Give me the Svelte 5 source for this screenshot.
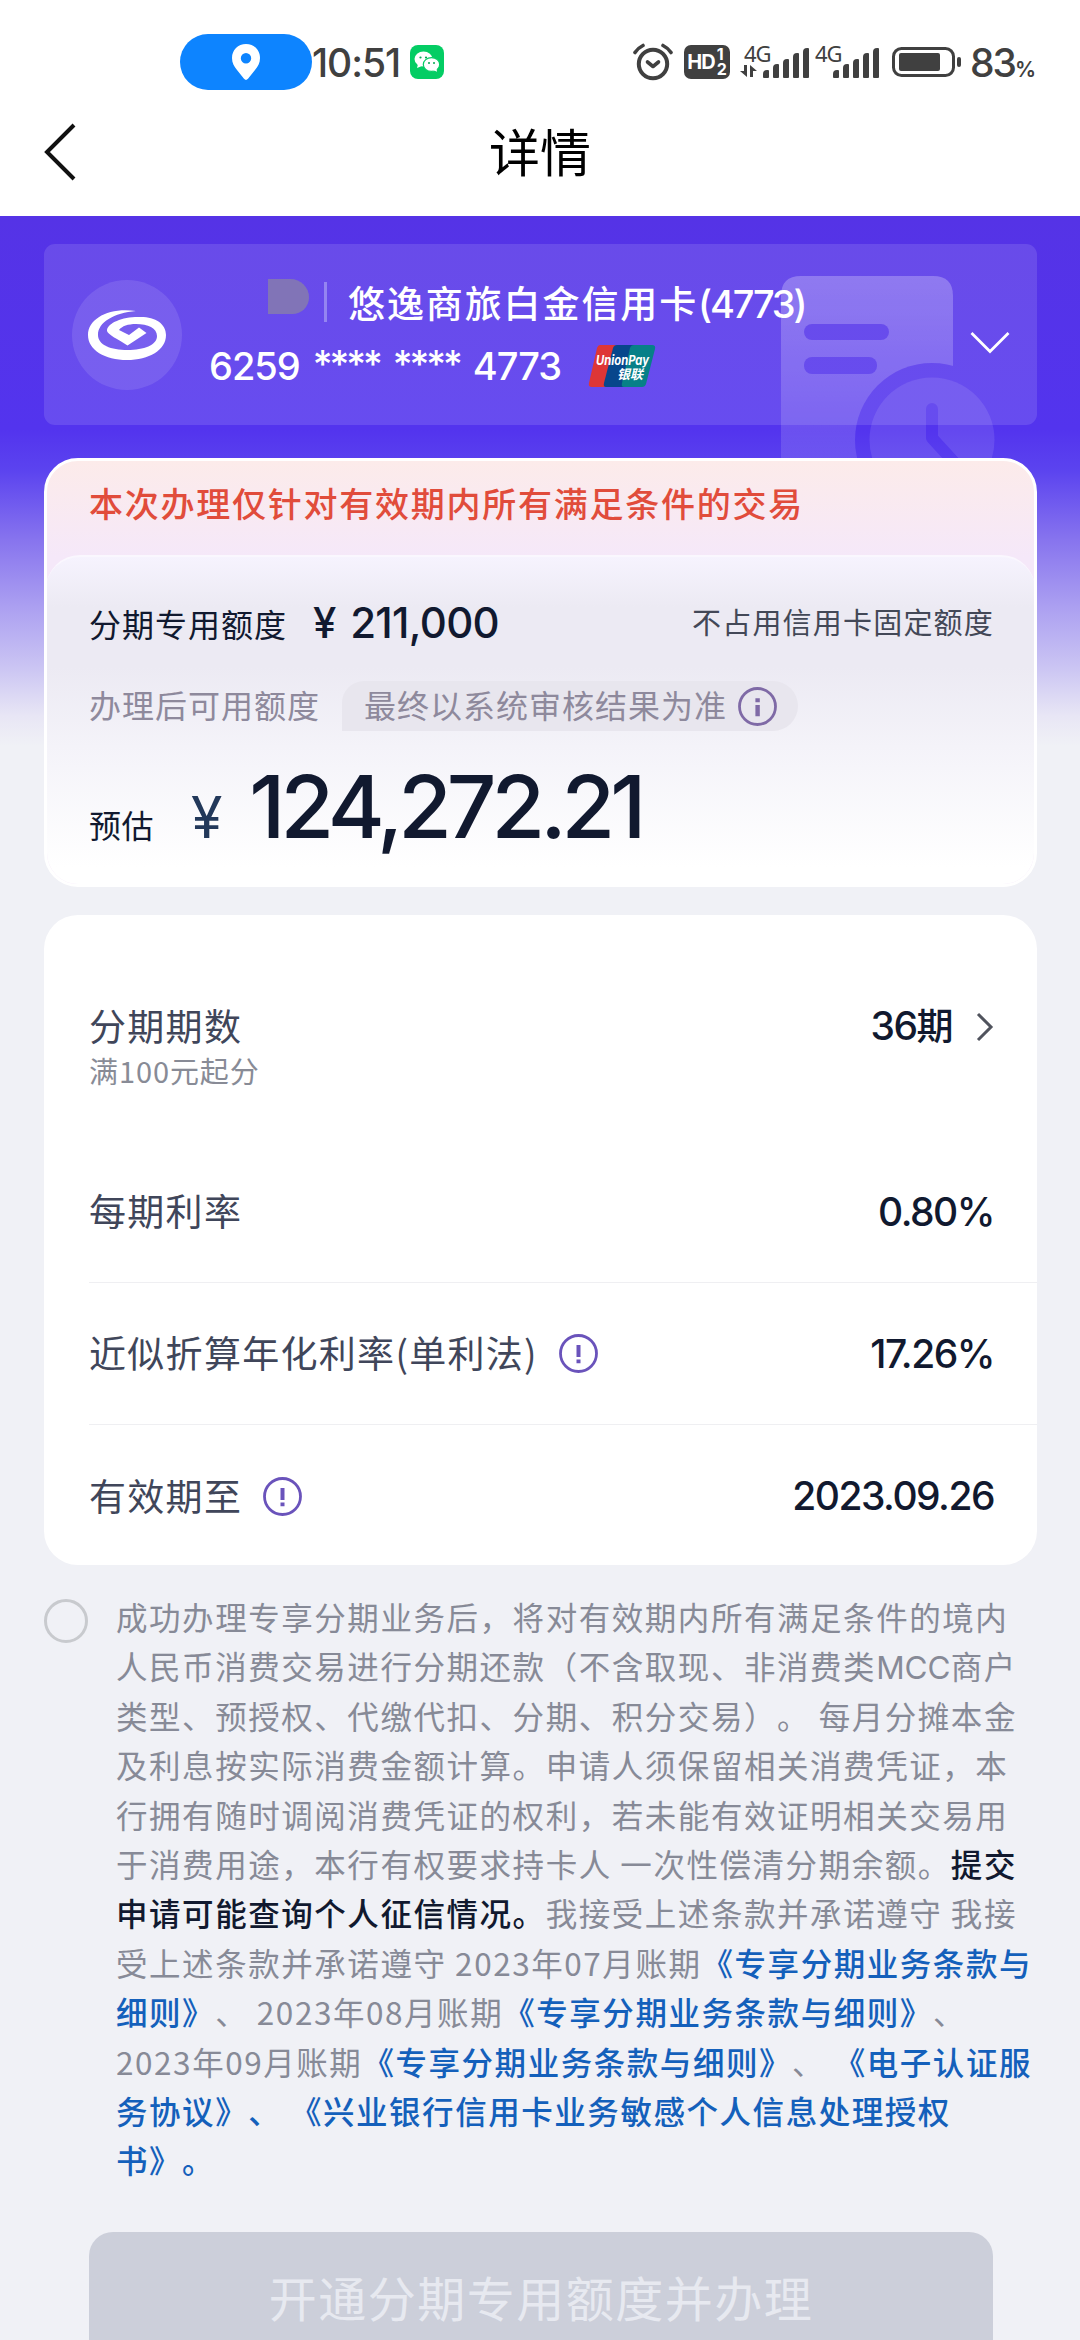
<script lang="ts">
  type Tone = 'plain' | 'latin' | 'strong' | 'link';

  interface Segment {
    text: string;
    tone: Tone;
  }

  interface Detail {
    label: string;
    value: string;
    hint: boolean;
  }

  const signalBars = [8, 14, 19, 25, 30];

  const details: Detail[] = [
    { label: '每期利率', value: '0.80%', hint: false },
    { label: '近似折算年化利率(单利法)', value: '17.26%', hint: true },
    { label: '有效期至', value: '2023.09.26', hint: true },
  ];

  const plain = (text: string): Segment => ({ text, tone: 'plain' });
  const latin = (text: string): Segment => ({ text, tone: 'latin' });
  const strong = (text: string): Segment => ({ text, tone: 'strong' });
  const link = (text: string): Segment => ({ text, tone: 'link' });

  const terms: Segment[][] = [
    [plain('成功办理专享分期业务后，将对有效期内所有满足条件的境内')],
    [plain('人民币消费交易进行分期还款（不含取现、非消费类'), latin('MCC'), plain('商户')],
    [plain('类型、预授权、代缴代扣、分期、积分交易）。 每月分摊本金')],
    [plain('及利息按实际消费金额计算。申请人须保留相关消费凭证，本')],
    [plain('行拥有随时调阅消费凭证的权利，若未能有效证明相关交易用')],
    [plain('于消费用途，本行有权要求持卡人 一次性偿清分期余额。'), strong('提交')],
    [strong('申请可能查询个人征信情况。'), plain('我接受上述条款并承诺遵守 我接')],
    [plain('受上述条款并承诺遵守 2023年07月账期'), link('《专享分期业务条款与')],
    [link('细则》'), plain('、 2023年08月账期'), link('《专享分期业务条款与细则》'), plain('、')],
    [plain('2023年09月账期'), link('《专享分期业务条款与细则》'), plain('、 '), link('《电子认证服')],
    [link('务协议》、 《兴业银行信用卡业务敏感个人信息处理授权')],
    [link('书》。')],
  ];

  let accepted = $state(false);
</script>

{#snippet signal(data: boolean)}
  <div class="signal" class:data>
    <span class="network">4G</span>
    {#if data}
      <svg class="arrows" width="17" height="12" viewBox="0 0 17 12">
        <path d="M4 0h3v12L0 6h4zM10 12V0l7 6h-4v6z" fill="#404040" />
      </svg>
    {/if}
    <div class="bars">
      {#each signalBars as height}
        <i style="height: {height}px"></i>
      {/each}
    </div>
  </div>
{/snippet}

<div class="page" lang="zh-CN">
  <div class="status">
    <div class="location">
      <svg width="28" height="36" viewBox="0 0 28 36">
        <path
          d="M14 0C6 0 0 6 0 14c0 5 2 8 5 12l7 8.800q2 2.200 4 0L23 26c3-4 5-7 5-12C28 6 22 0 14 0zm0 9a5.200 5.200 0 1 1 0 10.400A5.200 5.200 0 0 1 14 9z"
          fill="#fff"
          fill-rule="evenodd"
        />
      </svg>
    </div>
    <span class="time">10:51</span>
    <svg class="wechat" width="34" height="34" viewBox="0 0 34 34">
      <rect width="34" height="34" rx="8" fill="#04cd64" />
      <ellipse cx="13.500" cy="14" rx="9" ry="7.500" fill="#fff" />
      <path d="M8 19l-1 4 5-2z" fill="#fff" />
      <ellipse cx="21.500" cy="19.500" rx="8.200" ry="6.900" fill="#fff" stroke="#04cd64" stroke-width="1.200" />
      <path d="M23 25l4 1.800-.5-3.800z" fill="#fff" />
      <g fill="#04a852">
        <circle cx="10.500" cy="12.500" r="1.100" />
        <circle cx="16" cy="12.500" r="1.100" />
        <circle cx="19" cy="18" r="1" />
        <circle cx="24" cy="18" r="1" />
      </g>
    </svg>

    <div class="system">
      <svg width="40" height="38" viewBox="0 0 40 38" fill="none" stroke="#404040" stroke-linecap="round">
        <circle cx="20" cy="21" r="14.200" stroke-width="4" />
        <path d="M14.500 19l5.500 4.500 5.500-4.500" stroke-width="3.600" stroke-linejoin="round" />
        <path d="M2 9.500Q5 5 10 2.500M38 9.500Q35 5 30 2.500" stroke-width="3.600" />
      </svg>
      <div class="hd">
        <span>HD</span>
        <div class="slots"><b>1</b><b>2</b></div>
      </div>
      {@render signal(true)}
      {@render signal(false)}
      <svg class="battery" width="70" height="30" viewBox="0 0 70 30">
        <rect x="1.500" y="1.500" width="60" height="27" rx="8" fill="none" stroke="#404040" stroke-width="3" />
        <rect x="7" y="6" width="41" height="18" rx="2" fill="#404040" />
        <rect x="65" y="10" width="4" height="10" rx="2" fill="#404040" />
      </svg>
      <span class="level">83<small>%</small></span>
    </div>
  </div>

  <header>
    <svg class="back" width="34" height="60" viewBox="0 0 34 60" fill="none" stroke="#111" stroke-width="4">
      <path d="M31 3L4 30l27 27" />
    </svg>
    <h1>详情</h1>
  </header>

  <main>
    <svg class="watermark" width="240" height="242" viewBox="0 0 240 242">
      <defs>
        <linearGradient id="doc" x1="0" y1="0" x2="0" y2="1">
          <stop offset="0" stop-color="#fff" stop-opacity="0.260" />
          <stop offset="1" stop-color="#fff" stop-opacity="0.120" />
        </linearGradient>
        <mask id="cut">
          <rect width="240" height="242" fill="#fff" />
          <rect x="23" y="108" width="85" height="16" rx="8" fill="#000" />
          <rect x="23" y="141" width="73" height="17" rx="8" fill="#000" />
          <circle cx="151" cy="224" r="77" fill="#000" />
        </mask>
        <mask id="hands">
          <rect width="240" height="242" fill="#fff" />
          <path
            d="M151 193v29l22 24"
            fill="none"
            stroke="#000"
            stroke-width="12"
            stroke-linecap="round"
            stroke-linejoin="round"
          />
        </mask>
      </defs>
      <path d="M0 242V80Q0 60 20 60H152Q172 60 172 80V242z" fill="url(#doc)" mask="url(#cut)" />
      <circle cx="151" cy="224" r="62.500" fill="#fff" fill-opacity="0.100" mask="url(#hands)" />
    </svg>

    <section class="account">
      <div class="emblem">
        <svg width="78" height="50" viewBox="0 0 78 50">
          <path
            d="M48 1C22-3 0 8 0 25c0 15 17 25 39 25s39-10 39-25C78 13 66 6 50 7 34 7 20 13 19 20c-1 4 11 9 20.500 15.500L58.500 23 51 17.500 41 25l-10-5c3-4 9-6 17-6 12 0 21 4 21 12 0 9-13 14-29.500 14S10 35 10 25C10 12 26 3 48 1z"
            fill="#fff"
          />
        </svg>
      </div>
      <div class="account-text">
        <div class="account-name">
          <i class="mask"></i>
          <i class="divider"></i>
          <span>悠逸商旅白金信用卡<em>(4773)</em></span>
        </div>
        <div class="account-number">
          <span>6259</span>
          <span class="stars">****</span>
          <span class="stars">****</span>
          <span>4773</span>
          <svg class="unionpay" width="68" height="42" viewBox="0 0 68 42">
            <path d="M12 0h16L18 42H4Q0 42 1 38L9 3Q10 0 12 0z" fill="#de3636" />
            <path d="M29 0h18L36 42H18Q15 42 16 38L25 3Q26 0 29 0z" fill="#07468c" />
            <path d="M46 0h18q4 0 3 4l-9 35q-1 3-4 3H36q-3 0-2-4l8-35q1-3 4-3z" fill="#078088" />
            <text x="8" y="20" class="union-en" textLength="53" lengthAdjust="spacingAndGlyphs">UnionPay</text>
            <text x="29" y="34" class="union-cn" textLength="26">银联</text>
          </svg>
        </div>
      </div>
      <svg class="down" width="40" height="24" viewBox="0 0 40 24" fill="none" stroke="#fff" stroke-width="2.800">
        <path d="M1.500 2L20 20.500 38.500 2" />
      </svg>
    </section>

    <section class="quota">
      <p class="notice">本次办理仅针对有效期内所有满足条件的交易</p>
      <div class="quota-body">
        <div class="limit">
          <span class="limit-label">分期专用额度</span>
          <span class="limit-value">¥ 211,000</span>
          <span class="limit-note">不占用信用卡固定额度</span>
        </div>
        <div class="available">
          <span>办理后可用额度</span>
          <div class="bubble">
            <span>最终以系统审核结果为准</span>
            <svg width="39" height="39" viewBox="0 0 39 39">
              <circle cx="19.500" cy="19.500" r="18" fill="none" stroke="#7f6aa6" stroke-width="2.800" />
              <path d="M17.400 11.200h4.400v4h-4.400zM17.400 18h4.400v11.200h-4.400z" fill="#7f6aa6" />
            </svg>
          </div>
        </div>
        <div class="estimate">
          <span class="estimate-label">预估</span>
          <span class="currency">¥</span>
          <span class="amount">124,272.21</span>
        </div>
      </div>
    </section>

    <section class="details">
      <div class="row periods">
        <div class="periods-label">
          <span class="label">分期期数</span>
          <small>满100元起分</small>
        </div>
        <div class="periods-value">
          <span class="value">36<em>期</em></span>
          <svg width="18" height="30" viewBox="0 0 18 30" fill="none" stroke="#50535d" stroke-width="3">
            <path d="M2 2l13 13L2 28" />
          </svg>
        </div>
      </div>
      {#each details as item}
        <div class="row">
          <span class="label">{item.label}</span>
          {#if item.hint}
            <svg class="hint" width="39" height="39" viewBox="0 0 39 39">
              <circle cx="19.500" cy="19.500" r="18" fill="none" stroke="#6a53bb" stroke-width="2.800" />
              <path d="M17.500 11h4v12h-4zM17.500 25.500h4v3.800h-4z" fill="#6a53bb" />
            </svg>
          {/if}
          <span class="value">{item.value}</span>
        </div>
      {/each}
    </section>

    <section class="agreement">
      <button
        class="check"
        class:accepted
        aria-label="同意"
        aria-pressed={accepted}
        onclick={() => (accepted = !accepted)}
      ></button>
      <div class="terms">
        {#each terms as line}
          <p>{#each line as part}<span class={part.tone}>{part.text}</span>{/each}</p>
        {/each}
      </div>
    </section>

    <button class="submit" disabled={!accepted}>开通分期专用额度并办理</button>
  </main>
</div>

<style>
  :global(body) {
    margin: 0;
    background: #f0f1f6;
  }

  .page {
    width: 1080px;
    height: 2340px;
    overflow: hidden;
    display: flex;
    flex-direction: column;
    background: #f0f1f6;
    font-family: 'Noto Sans CJK SC', sans-serif;
    color: #11192f;
    text-spacing-trim: space-all;
  }

  .page * {
    box-sizing: border-box;
  }

  h1,
  p {
    margin: 0;
    font-weight: 400;
  }

  em,
  i {
    font-style: normal;
  }

  svg {
    display: block;
    flex: none;
  }

  /* status bar */
  .status {
    flex: none;
    height: 94px;
    padding: 30px 46px 0 180px;
    display: flex;
    align-items: center;
    background: #fff;
    font-family: Inter, sans-serif;
    color: #404040;
  }

  .location {
    width: 132px;
    height: 56px;
    border-radius: 28px;
    background: #0d84ff;
    display: flex;
    align-items: center;
    justify-content: center;
  }

  .time {
    width: 98px;
    font-size: 39px;
    font-weight: 500;
    letter-spacing: -1.100px;
    white-space: nowrap;
  }

  .system {
    margin-left: auto;
    display: flex;
    align-items: center;
  }

  .hd {
    width: 46px;
    height: 34px;
    margin: 0 10px 0 11px;
    border-radius: 7px;
    background: #404040;
    color: #fff;
    display: flex;
    align-items: center;
    justify-content: center;
    gap: 2px;
    font-size: 20px;
    font-weight: 700;
    letter-spacing: -1px;
  }

  .slots {
    display: flex;
    flex-direction: column;
    font-size: 16px;
    line-height: 15px;
    letter-spacing: 0;
  }

  .slots b {
    font-weight: 700;
  }

  .signal {
    position: relative;
    width: 64px;
    height: 34px;
    margin-right: 5px;
    display: flex;
    justify-content: flex-end;
    align-items: flex-end;
  }

  .signal.data {
    width: 69px;
    margin-right: 6px;
  }

  .network {
    position: absolute;
    left: 0;
    top: -3px;
    font-family: 'Noto Sans', sans-serif;
    font-size: 22px;
    line-height: 22px;
    letter-spacing: -1px;
  }

  .signal.data .network {
    left: 4px;
  }

  .arrows {
    position: absolute;
    left: 0;
    bottom: 2px;
  }

  .bars {
    display: flex;
    align-items: flex-end;
    gap: 3.500px;
    padding-bottom: 1px;
  }

  .bars i {
    width: 6.500px;
    border-radius: 4px 1px 1px 1px;
    background: #404040;
  }

  .battery {
    margin-left: 8px;
  }

  .level {
    margin-left: 8px;
    width: 64px;
    font-size: 39px;
    font-weight: 500;
    letter-spacing: -2px;
    white-space: nowrap;
  }

  .level small {
    font-size: 21px;
    font-weight: 600;
  }

  /* title bar */
  header {
    flex: none;
    height: 122px;
    padding: 0 43px;
    display: grid;
    grid-template-columns: 34px 1fr 34px;
    align-items: center;
    background: #fff;
    color: #000;
  }

  h1 {
    text-align: center;
    font-size: 51px;
    line-height: 60px;
    margin-bottom: 10px;
  }

  .back {
    margin-bottom: 7px;
  }

  main {
    position: relative;
    flex: 1;
    min-height: 0;
    padding: 28px 43px 0 44px;
    display: flex;
    flex-direction: column;
    background: linear-gradient(
      #5533e6 0,
      #5334ee 214px,
      #5b43ef 254px,
      #8774ee 324px,
      #ab9ff1 390px,
      #cbc5f3 452px,
      #e8e6f5 500px,
      #f0f1f6 530px
    );
  }

  .watermark {
    position: absolute;
    left: 781px;
    top: 0;
  }

  /* account card */
  .account {
    position: relative;
    flex: none;
    height: 181px;
    padding: 0 27px 0 28px;
    border-radius: 11px;
    background: rgba(255, 255, 255, 0.120);
    color: #fff;
    display: flex;
    align-items: center;
  }

  .emblem {
    width: 110px;
    height: 110px;
    border-radius: 50%;
    background: rgba(255, 255, 255, 0.110);
    display: flex;
    align-items: center;
    justify-content: center;
  }

  .account-text {
    width: 640px;
    margin-left: 27px;
    margin-bottom: 2px;
    display: flex;
    flex-direction: column;
    gap: 4px;
  }

  .account-name {
    height: 60px;
    padding-left: 59px;
    display: flex;
    align-items: center;
    font-size: 37px;
    font-weight: 500;
    letter-spacing: 1.900px;
    white-space: nowrap;
  }

  .account-name em {
    font-family: Inter, sans-serif;
    font-size: 38px;
    letter-spacing: -2.200px;
  }

  .mask {
    width: 41px;
    height: 35px;
    margin-bottom: 10px;
    border-radius: 0 20px 18px 0;
    background: #8174b7;
  }

  .divider {
    width: 3px;
    height: 40px;
    margin: 0 21px 0 15px;
    background: #9484f1;
  }

  .account-number {
    height: 60px;
    display: flex;
    align-items: center;
    gap: 13px;
    font-family: Inter, sans-serif;
    font-size: 38px;
    font-weight: 500;
    letter-spacing: -1px;
  }

  .stars {
    width: 67px;
    margin-top: -4px;
    letter-spacing: -3px;
  }

  .unionpay {
    margin-left: 14px;
    overflow: visible;
  }

  .union-en {
    font: italic 700 13px Inter, sans-serif;
    fill: #fff;
    letter-spacing: 0;
  }

  .union-cn {
    font: italic 700 13px 'Noto Sans CJK SC', sans-serif;
    fill: #fff;
    letter-spacing: 0;
  }

  .down {
    margin-left: auto;
    margin-top: 16px;
  }

  /* quota card */
  .quota {
    position: relative;
    flex: none;
    height: 429px;
    margin-top: 33px;
    border: 3px solid #fff;
    border-radius: 34px;
    background: linear-gradient(#fcebea, #f5e8f9 96px, #f5e8f9);
    overflow: hidden;
    display: flex;
    flex-direction: column;
  }

  .notice {
    height: 96px;
    padding-left: 42px;
    font-size: 34px;
    font-weight: 500;
    line-height: 83px;
    letter-spacing: 1.750px;
    color: #e14c3b;
  }

  .quota-body {
    flex: 1;
    margin: 0 -1px;
    padding: 34px 43px 0;
    border-top: 2px solid #faf7fe;
    border-radius: 34px 34px 0 0;
    background: linear-gradient(#f6f3fe, #eceaf3 50px, #eceaf3 110px, #f4f3f9 190px, #fff 310px);
  }

  .limit {
    height: 64px;
    display: flex;
    align-items: center;
    white-space: nowrap;
  }

  .limit-label {
    font-size: 32px;
    letter-spacing: 1px;
  }

  .limit-value {
    margin-left: 26px;
    margin-bottom: 1px;
    font-family: Inter, sans-serif;
    font-size: 42px;
    font-weight: 500;
    letter-spacing: -0.700px;
    word-spacing: 4px;
  }

  .limit-note {
    margin-left: auto;
    margin-right: -2px;
    margin-bottom: 4px;
    font-size: 29px;
    letter-spacing: 1.200px;
    color: #434857;
  }

  .available {
    height: 50px;
    margin-top: 26px;
    display: flex;
    align-items: center;
    font-size: 32px;
    line-height: 46px;
    letter-spacing: 1px;
    color: #8e899c;
    white-space: nowrap;
  }

  .available span {
    margin-bottom: 4px;
  }

  .bubble {
    height: 50px;
    width: 456px;
    margin-left: 22px;
    padding: 0 21px 0 22px;
    border-radius: 22px 25px 25px 0;
    background: #e8e6ee;
    display: flex;
    align-items: center;
    justify-content: space-between;
  }

  .estimate {
    height: 130px;
    margin-top: 23px;
    display: flex;
    align-items: baseline;
    white-space: nowrap;
  }

  .estimate-label {
    font-size: 32px;
    letter-spacing: 0.500px;
  }

  .currency {
    margin-left: 37px;
    font-family: Inter, sans-serif;
    font-size: 57px;
    color: #22385a;
  }

  .amount {
    margin-left: 27px;
    font-family: Inter, sans-serif;
    font-size: 87px;
    font-weight: 500;
    letter-spacing: -5px;
  }

  /* plan details */
  .details {
    flex: none;
    height: 650px;
    margin-top: 28px;
    padding-left: 45px;
    border-radius: 34px;
    background: #fff;
  }

  .row {
    height: 142px;
    padding-right: 43px;
    display: flex;
    align-items: center;
    border-bottom: 1px solid #efeff2;
  }

  .row:last-child {
    border-bottom: 0;
  }

  .periods {
    height: 226px;
    align-items: flex-start;
    padding-top: 87px;
    border-bottom: 0;
  }

  .periods-label {
    display: flex;
    flex-direction: column;
  }

  .periods-label small {
    font-size: 29px;
    line-height: 42px;
    letter-spacing: 0.900px;
    color: #888b96;
  }

  .label {
    font-size: 37px;
    line-height: 46px;
    letter-spacing: 1.300px;
    color: #40465a;
    white-space: nowrap;
    margin-bottom: 3px;
  }

  .periods .label {
    margin-bottom: 1px;
  }

  .hint {
    margin-left: 21px;
  }

  .value {
    margin-left: auto;
    font-family: Inter, 'Noto Sans CJK SC', sans-serif;
    font-size: 39px;
    font-weight: 500;
    line-height: 48px;
    letter-spacing: -1.500px;
    white-space: nowrap;
  }

  .value em {
    font-size: 37px;
  }

  .periods-value {
    margin-left: auto;
    display: flex;
    align-items: center;
    gap: 24px;
  }

  /* agreement */
  .agreement {
    flex: none;
    margin-top: 27px;
    display: flex;
    align-items: flex-start;
  }

  .check {
    flex: none;
    width: 44px;
    height: 44px;
    margin: 7px 28px 0 0;
    padding: 0;
    border: 3px solid #c8cace;
    border-radius: 50%;
    background: transparent;
  }

  .check.accepted {
    background: #5334ee;
  }

  .terms {
    font-size: 31.500px;
    line-height: 49.400px;
    letter-spacing: 1.550px;
    color: #878a97;
  }

  .terms p {
    white-space: pre;
  }

  /* Inter runs wider than the CJK face, so it keeps a tighter tracking */
  .latin {
    font-family: Inter, sans-serif;
    letter-spacing: 0;
    line-height: 1;
  }

  .strong {
    font-weight: 500;
    color: #11192f;
  }

  .link {
    font-weight: 500;
    color: #1460bb;
  }

  .submit {
    flex: none;
    height: 132px;
    margin: 47px 44px 0 45px;
    padding: 0 0 4px;
    border: 0;
    border-radius: 24px;
    background: #cccfda;
    font-family: inherit;
    font-size: 48px;
    letter-spacing: 1.500px;
    color: #e7e9f0;
  }
</style>
